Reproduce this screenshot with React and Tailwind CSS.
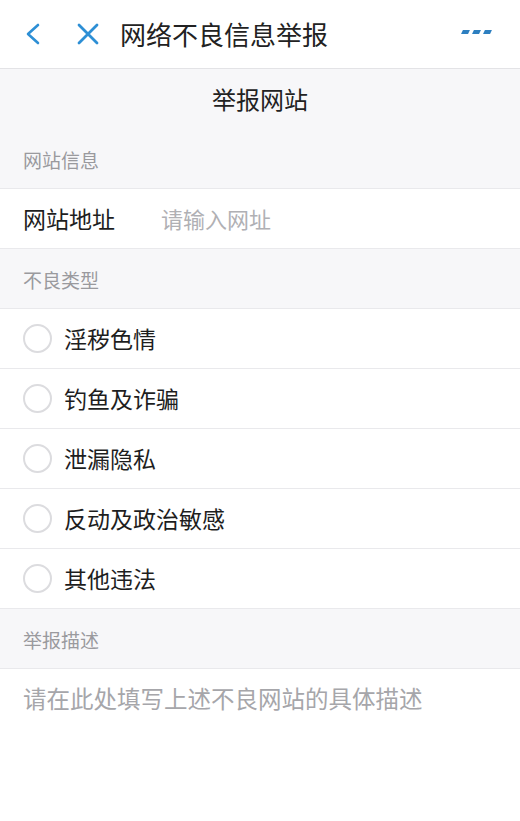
const FONT = { fontFamily: '"Noto Sans CJK SC", "Noto Sans", sans-serif' };

const types = ['淫秽色情', '钓鱼及诈骗', '泄漏隐私', '反动及政治敏感', '其他违法'];

function SectionLabel({ children }) {
  return (
    <div className="h-[60px] flex items-center pt-[4px] px-[23px] bg-[#f7f7f9] border-b border-[#e9e9ec]">
      <span className="text-[19px] text-[#9a9a9e]">{children}</span>
    </div>
  );
}

export default function App() {
  return (
    <div className="w-[520px] h-[821px] bg-white overflow-hidden" style={FONT}>
      {/* Top bar */}
      <div className="h-[69px] flex items-center border-b border-[#e3e3e6] bg-white">
        <svg width="18" height="24" viewBox="0 0 18 24" className="ml-[23px]">
          <path d="M15 3 L5 12 L15 21" fill="none" stroke="#2d8fd5" strokeWidth="2.6" strokeLinecap="round" strokeLinejoin="round" />
        </svg>
        <svg width="24" height="24" viewBox="0 0 24 24" className="ml-[35px]">
          <path d="M3 3 L21 21 M21 3 L3 21" fill="none" stroke="#2d8fd5" strokeWidth="2.8" strokeLinecap="round" />
        </svg>
        <span className="ml-[20px] text-[26px] text-[#222] leading-none">网络不良信息举报</span>
        <div className="ml-auto mr-[29px] flex gap-[4px] -mt-[4px]">
          <span className="w-[7px] h-[4px] bg-[#2d7fc0] -skew-x-[25deg]" />
          <span className="w-[7px] h-[4px] bg-[#2d7fc0] -skew-x-[25deg]" />
          <span className="w-[7px] h-[4px] bg-[#2d7fc0] -skew-x-[25deg]" />
        </div>
      </div>

      <div className="h-[60px] flex items-center justify-center bg-[#f7f7f9]">
        <span className="text-[24px] text-[#222]">举报网站</span>
      </div>

      <SectionLabel>网站信息</SectionLabel>
      <div className="h-[60px] flex items-center px-[23px] bg-white border-b border-[#e9e9ec]">
        <span className="text-[23px] text-[#1e1e1e] w-[138px]">网站地址</span>
        <span className="text-[22px] text-[#b0b0b4]">请输入网址</span>
      </div>

      <SectionLabel>不良类型</SectionLabel>
      {types.map((t) => (
        <div key={t} className="h-[60px] flex items-center px-[23px] bg-white border-b border-[#e9e9ec]">
          <span className="w-[29px] h-[29px] rounded-full border-2 border-[#dcdcdf]" />
          <span className="ml-[12px] text-[23px] text-[#1e1e1e]">{t}</span>
        </div>
      ))}

      <SectionLabel>举报描述</SectionLabel>
      <div className="px-[23px] pt-[12px] bg-white">
        <span className="text-[23.5px] text-[#a6a6aa]">请在此处填写上述不良网站的具体描述</span>
      </div>
    </div>
  );
}
